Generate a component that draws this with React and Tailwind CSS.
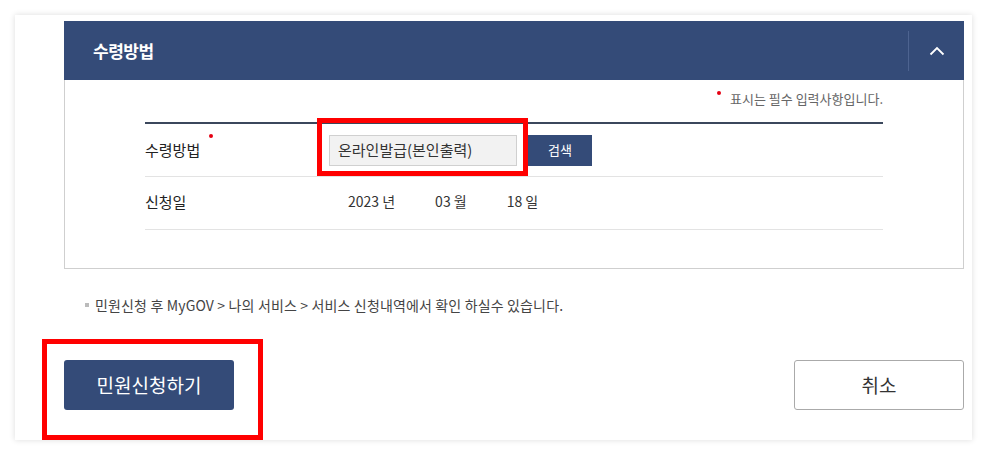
export default function App() {
  const font = { fontFamily: '"Noto Sans CJK KR", "Noto Sans", sans-serif' };
  return (
    <div className="relative w-[987px] h-[456px] bg-white overflow-hidden" style={font}>
      <div className="ml-[15px] mt-[15px] w-[957px] h-[425px] bg-white shadow-[0_0_6px_rgba(0,0,0,0.14)] pl-[49px] pr-[8px] pt-[6px] flex flex-col">
        {/* Header */}
        <div className="h-[59px] bg-[#344b78] flex items-center justify-between">
          <div className="pl-[29px] text-white text-[17px] font-bold tracking-[-0.5px]">수령방법</div>
          <div className="h-[40px] w-[56px] border-l border-[#4d6390] flex items-center justify-center">
            <svg width="16" height="10" viewBox="0 0 16 10" fill="none">
              <path d="M1.5 8.5 L8 2 L14.5 8.5" stroke="white" strokeWidth="1.8" />
            </svg>
          </div>
        </div>
        {/* Body */}
        <div className="h-[189px] border border-t-0 border-[#cfcfcf] px-[80px] pt-[9px]">
          <div className="flex justify-end items-start h-[33px]">
            <span className="w-[4px] h-[4px] rounded-full bg-[#e60012] mt-[2px] mr-[9px]"></span>
            <span className="text-[13px] text-[#666] leading-[20px]">표시는 필수 입력사항입니다.</span>
          </div>
          <div className="border-t-2 border-[#3b475c]">
            <div className="h-[53px] border-b border-[#e3e3e3] flex items-center">
              <div className="w-[184px] flex items-start">
                <span className="text-[15px] text-[#222] leading-[20px]">수령방법</span>
                <span className="w-[4px] h-[4px] rounded-full bg-[#e60012] ml-[9px] -mt-[6px]"></span>
              </div>
              <div className="w-[188px] h-[31px] bg-[#f2f2f2] border border-[#d0d0d0] flex items-center pl-[8px] text-[15px] text-[#333]">
                온라인발급(본인출력)
              </div>
              <div className="ml-[11px] w-[64px] h-[31px] bg-[#344b78] text-white text-[13px] flex items-center justify-center">검색</div>
            </div>
            <div className="h-[53px] border-b border-[#e3e3e3] flex items-center">
              <div className="w-[184px] text-[15px] text-[#222] leading-[20px] -mt-[3px]">신청일</div>
              <div className="ml-[19px] flex gap-[40px] text-[14px] text-[#333] -mt-[3px]">
                <span>2023 년</span>
                <span>03 월</span>
                <span>18 일</span>
              </div>
            </div>
          </div>
        </div>
        {/* Notice */}
        <div className="mt-[26px] flex items-center pl-[21px] h-[20px]">
          <span className="w-[4px] h-[4px] bg-[#bbb] mr-[6px]"></span>
          <span className="text-[14px] text-[#444] tracking-[0.15px]">민원신청 후 MyGOV &gt; 나의 서비스 &gt; 서비스 신청내역에서 확인 하실수 있습니다.</span>
        </div>
        {/* Buttons */}
        <div className="mt-[45px] flex justify-between">
          <button className="w-[170px] h-[50px] bg-[#344b78] rounded-[3px] text-white text-[19px]">민원신청하기</button>
          <button className="w-[170px] h-[50px] bg-white border border-[#aaa] rounded-[3px] text-[#333] text-[19px]">취소</button>
        </div>
      </div>
      {/* Annotation boxes */}
      <div className="absolute left-[317px] top-[118px] w-[211px] h-[58px] border-[5px] border-[#ff0000]"></div>
      <div className="absolute left-[42px] top-[339px] w-[221px] h-[101px] border-[5px] border-[#ff0000]"></div>
    </div>
  );
}
